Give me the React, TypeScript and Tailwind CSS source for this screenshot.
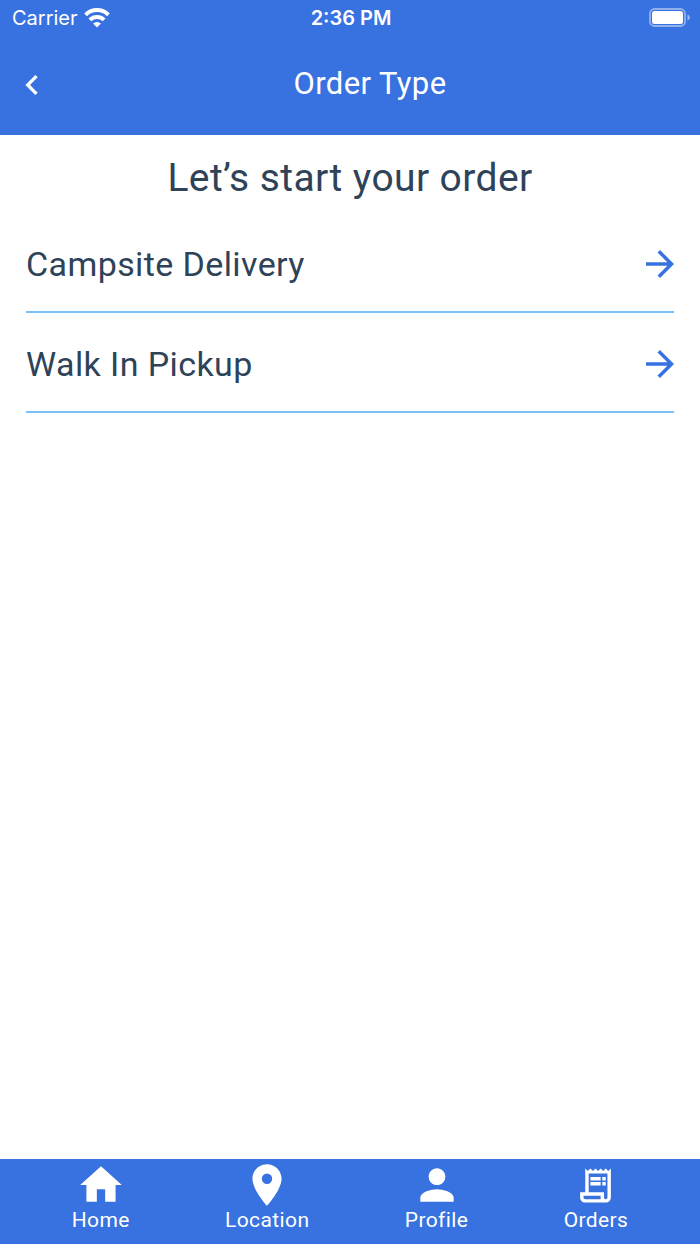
import type { IconType } from "react-icons";
import {
  MdChevronLeft,
  MdHome,
  MdLocationOn,
  MdOutlineReceiptLong,
  MdPerson,
} from "react-icons/md";

const orderTypes = ["Campsite Delivery", "Walk In Pickup"];

function WifiIcon() {
  return (
    <svg viewBox="0 0 26 20" className="h-5 w-[26px]" fill="none" stroke="white" strokeWidth="4">
      <path d="M1.6 6.8a16.2 16.2 0 0 1 22.8 0" />
      <path d="M5.9 11.8a10.1 10.1 0 0 1 14.2 0" />
      <path d="M13 19.4l-3.9-3.9a5.5 5.5 0 0 1 7.8 0z" fill="white" stroke="none" />
    </svg>
  );
}

function BatteryIcon() {
  return (
    <svg viewBox="0 0 41 20" className="h-5 w-[41px]" fill="none">
      <rect x="1" y="1" width="35" height="17" rx="4.5" stroke="white" strokeOpacity="0.45" strokeWidth="1.8" />
      <rect x="3" y="3" width="31" height="13" rx="2.5" fill="white" />
      <path d="M38.5 6.5c1.6.6 2.3 1.7 2.3 3s-.7 2.4-2.3 3z" fill="white" fillOpacity="0.5" />
    </svg>
  );
}

function ArrowIcon() {
  return (
    <svg viewBox="4 4 16 16" className="size-7 text-[#3871e0]" fill="currentColor">
      <path d="M12 4l-1.41 1.41L16.17 11H4v2h12.17l-5.58 5.59L12 20l8-8z" />
    </svg>
  );
}

function StatusBar() {
  return (
    <div className="grid h-9 grid-cols-3 items-center pr-[10px] pl-3 font-['Inter',sans-serif] text-xl tracking-normal">
      <div className="flex items-center gap-1.5">
        <span>Carrier</span>
        <WifiIcon />
      </div>
      <span className="text-center font-semibold">2:36 PM</span>
      <div className="flex justify-end">
        <BatteryIcon />
      </div>
    </div>
  );
}

function OrderTypeRow({ label }: { label: string }) {
  return (
    <li className="border-b-2 border-[#7cc0f8]">
      <button type="button" className="flex h-[98px] w-full items-center justify-between pt-1 text-left text-[34px]">
        <span>{label}</span>
        <ArrowIcon />
      </button>
    </li>
  );
}

function Tab({ label, icon: Icon, small }: { label: string; icon: IconType; small?: boolean }) {
  return (
    <a href="#" className="flex flex-col items-center">
      <span className="flex h-[50px] items-center">
        <Icon className={small ? "size-[41px]" : "size-[50px]"} />
      </span>
      <span className="text-[21px] leading-5">{label}</span>
    </a>
  );
}

export default function App() {
  return (
    <div className="flex min-h-screen flex-col bg-white font-['Roboto',sans-serif] tracking-wide text-[#2f4358]">
      <header className="bg-[#3871e0] text-white">
        <StatusBar />
        <div className="flex h-[99px] items-start pt-7 pl-3">
          <button type="button" aria-label="Back" className="flex h-[42px] w-7 items-center">
            <MdChevronLeft className="size-10 shrink-0" />
          </button>
          <h1 className="flex-1 text-center text-[31px] leading-10">Order Type</h1>
        </div>
      </header>

      <main className="flex-1 px-[26px]">
        <h2 className="pt-[18px] pb-[10px] text-center text-[39px] leading-[50px]">Let’s start your order</h2>
        <ul>
          {orderTypes.map((label) => (
            <OrderTypeRow key={label} label={label} />
          ))}
        </ul>
      </main>

      <nav className="flex h-[85px] justify-around bg-[#3871e0] px-6 pt-px text-white">
        <Tab label="Home" icon={MdHome} />
        <Tab label="Location" icon={MdLocationOn} />
        <Tab label="Profile" icon={MdPerson} />
        <Tab label="Orders" icon={MdOutlineReceiptLong} small />
      </nav>
    </div>
  );
}
